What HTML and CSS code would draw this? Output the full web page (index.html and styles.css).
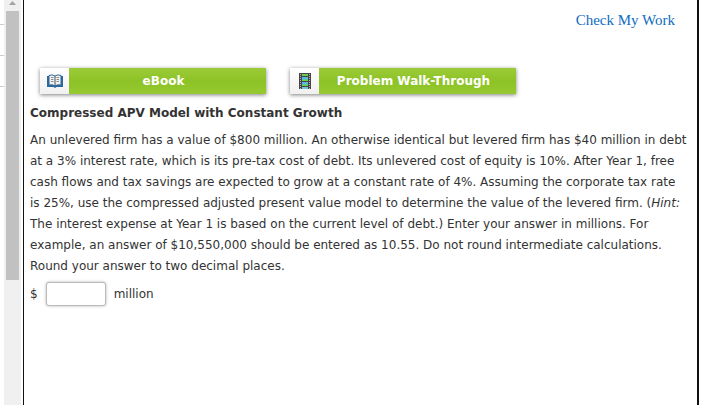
FILE: index.html
```html
<!DOCTYPE html>
<html lang="en">
<head>
  <meta charset="UTF-8">
  <meta name="viewport" content="width=device-width, initial-scale=1.0">
  <title>Compressed APV Model with Constant Growth</title>
  <link rel="stylesheet" href="styles.css">
</head>
<body>
  <!-- Edge of the question list -->
  <div class="question-list">
    <div class="question-row"></div>
    <div class="question-row"></div>
    <div class="question-row"></div>
  </div>

  <!-- Scrollbar -->
  <div class="scrollbar">
    <svg class="scroll-arrow" width="7" height="4" viewBox="0 0 7 4"><path d="M0 4 L3.5 0 L7 4 Z" fill="#a3a3a3"/></svg>
    <div class="scroll-thumb"></div>
  </div>

  <main class="problem">
    <header class="top-bar">
      <a href="#" class="check-link">Check My Work</a>
    </header>

    <div class="resources">
      <button type="button" class="resource-button">
        <span class="resource-icon">
          <svg width="16" height="14" viewBox="0 0 16 14">
            <path d="M0 2 H2 V11 H7 L8 12 L9 11 H14 V2 H16 V13 H9.500 L8 14 L6.500 13 H0 Z" fill="#2c68a0"/>
            <path d="M2 1.500 Q5.500 0 8 2 Q10.500 0 14 1.500 V11 Q10.500 10 8 12 Q5.500 10 2 11 Z" fill="#f3f1ee" stroke="#2f6598" stroke-width="1"/>
            <path d="M8 2 V12" stroke="#3f566e" stroke-width="1"/>
            <path d="M4 3.500 H6.500 M4 5.500 H6.500 M4 7.500 H6.500 M9.500 3.500 H12 M9.500 5.500 H12 M9.500 7.500 H12" stroke="#8e8e8e" stroke-width="1"/>
          </svg>
        </span>
        <span class="resource-label">eBook</span>
      </button>
      <button type="button" class="resource-button">
        <span class="resource-icon">
          <svg width="12" height="16" viewBox="0 0 12 16">
            <rect width="12" height="16" fill="#454545"/>
            <path d="M1.500 1 V16 M10.500 1 V16" stroke="#b0b0b0" stroke-width="1" stroke-dasharray="1 1"/>
            <rect x="3" y="1" width="6" height="2" fill="#6cc95a"/>
            <rect x="3" y="4" width="6" height="4" fill="#55b4f2"/>
            <path d="M3 8 V7 L6 6 L9 7 V8 Z M6 4 H9 V5 Z" fill="#6cd352"/>
            <rect x="3" y="9" width="6" height="4" fill="#55b4f2"/>
            <path d="M3 13 V12 L6 11 L9 12 V13 Z M6 9 H9 V10 Z" fill="#6cd352"/>
            <rect x="3" y="14" width="6" height="2" fill="#76c8d8"/>
          </svg>
        </span>
        <span class="resource-label">Problem Walk-Through</span>
      </button>
    </div>

    <h1>Compressed APV Model with Constant Growth</h1>
    <p>
      An unlevered firm has a value of $800 million. An otherwise identical but levered firm has $40 million in debt<br>
      at a 3% interest rate, which is its pre-tax cost of debt. Its unlevered cost of equity is 10%. After Year 1, free<br>
      cash flows and tax savings are expected to grow at a constant rate of 4%. Assuming the corporate tax rate<br>
      is 25%, use the compressed adjusted present value model to determine the value of the levered firm. (<i>Hint:</i><br>
      The interest expense at Year 1 is based on the current level of debt.) Enter your answer in millions. For<br>
      example, an answer of $10,550,000 should be entered as 10.55. Do not round intermediate calculations.<br>
      Round your answer to two decimal places.
    </p>

    <form class="answer">
      <label for="answer-value">$</label>
      <input type="text" id="answer-value" name="answer-value">
      <label for="answer-value" class="unit">million</label>
    </form>
  </main>
</body>
</html>
```

FILE: styles.css
```css
:root {
  --text-color: #333;
  --link-color: #0f6cbf;
  --green: #93c62d;
}

* {
  margin: 0;
  padding: 0;
  box-sizing: border-box;
}

body {
  display: flex;
  min-height: 100vh;
  padding-right: 15px;
  background: #fff;
  color: var(--text-color);
  font-family: Verdana, "DejaVu Sans", sans-serif;
  font-size: 12px;
  line-height: 21px;
}

/* Question list */
.question-list {
  width: 4px;
}

.question-row {
  height: 31px;
  border-bottom: 1px solid #ccc;
}

.question-row:first-child {
  height: 25px;
}

/* Scrollbar */
.scrollbar {
  display: flex;
  flex-direction: column;
  align-items: center;
  width: 17px;
  margin-right: 2px;
  padding: 1px 2px;
  background: #f0f0f0;
}

.scroll-arrow {
  display: block;
  margin-bottom: 6px;
}

.scroll-thumb {
  width: 100%;
  height: 269px;
  background: #c1c1c1;
}

/* Problem panel */
.problem {
  flex: 1;
  padding: 10px 4px 0 6px;
  border-left: 1px solid #111;
  border-right: 2px solid #111;
}

.top-bar {
  padding-right: 18px;
  text-align: right;
}

.check-link {
  color: var(--link-color);
  font-family: Georgia, "Liberation Serif", serif;
  font-size: 15px;
  text-decoration: none;
}

/* Resource buttons */
.resources {
  display: flex;
  gap: 24px;
  margin: 36px 0 9px;
  padding-left: 10px;
}

.resource-button {
  display: flex;
  width: 226px;
  height: 26px;
  border: none;
  background: var(--green);
  box-shadow: 0 1px 4px rgba(0, 0, 0, 0.5);
  color: #fff;
  font-family: inherit;
  font-size: 12px;
  font-weight: bold;
  cursor: pointer;
}

.resource-icon {
  display: flex;
  align-items: center;
  justify-content: center;
  width: 29px;
  height: 100%;
  background: linear-gradient(#fff, #f0f0f0);
}

.resource-label {
  flex: 1;
  padding-right: 8px;
  line-height: 26px;
  background: linear-gradient(#9ccb38, #8dc326 50%, #96c930);
}

h1 {
  margin-bottom: 6px;
  font-size: 12px;
  line-height: 21px;
}

/* Answer */
.answer {
  display: flex;
  align-items: center;
  margin-top: 5px;
}

.answer input {
  width: 60px;
  height: 24px;
  margin: 0 8px;
  padding: 0 4px;
  border: 1px solid #bbb;
  border-radius: 3px;
  box-shadow: 0 0 3px rgba(0, 0, 0, 0.3);
  font: inherit;
}
```
